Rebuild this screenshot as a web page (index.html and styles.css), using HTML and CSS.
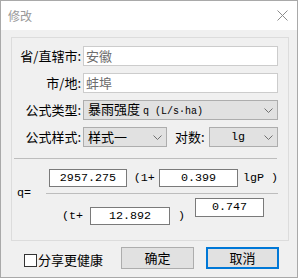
FILE: index.html
```html
<!DOCTYPE html>
<html lang="zh">
<head>
<meta charset="utf-8">
<title>修改</title>
<link rel="stylesheet" href="styles.css">
</head>
<body>
<div class="window">
  <div class="titlebar">
    <span class="title">修改</span>
    <svg class="close" width="11" height="11" viewBox="0 0 11 11"><path d="M0.5 0.5 L10.5 10.5 M10.5 0.5 L0.5 10.5" stroke="#8c8c8c" stroke-width="1" fill="none"/></svg>
  </div>
  <div class="content">
    <div class="group">
      <div class="form">
        <span class="label">省/直辖市:</span>
        <div class="field">安徽</div>
        <span class="label">市/地:</span>
        <div class="field">蚌埠</div>
        <span class="label">公式类型:</span>
        <div class="select"><span class="sel-text">暴雨强度 <span class="mono-s">q (L/s·ha)</span></span><svg class="chev" width="9" height="5" viewBox="0 0 9 5"><polyline points="0.5,0.5 4.5,4.5 8.5,0.5" fill="none" stroke="#707070" stroke-width="1"/></svg></div>
        <span class="label">公式样式:</span>
        <div class="row4">
          <div class="select s1"><span class="sel-text">样式一</span><svg class="chev" width="9" height="5" viewBox="0 0 9 5"><polyline points="0.5,0.5 4.5,4.5 8.5,0.5" fill="none" stroke="#707070" stroke-width="1"/></svg></div>
          <span class="label2">对数:</span>
          <div class="select s2"><span class="sel-text mono">lg</span><svg class="chev" width="9" height="5" viewBox="0 0 9 5"><polyline points="0.5,0.5 4.5,4.5 8.5,0.5" fill="none" stroke="#707070" stroke-width="1"/></svg></div>
        </div>
      </div>
      <div class="sep"></div>
      <div class="formula">
        <div class="fa">
          <div class="num n1">2957.275</div>
          <span class="op op1">(1+</span>
          <div class="num n2">0.399</div>
          <span class="op op2">lgP )</span>
        </div>
        <div class="fq">
          <span class="q">q=</span>
          <div class="fline"></div>
        </div>
        <div class="fb">
          <span class="op op3">(t+</span>
          <div class="num n3">12.892</div>
          <span class="op op4">)</span>
          <div class="num n4">0.747</div>
        </div>
      </div>
    </div>
    <div class="footer">
      <span class="checkbox"></span>
      <span class="check-label">分享更健康</span>
      <div class="buttons">
        <button class="btn">确定</button>
        <button class="btn btn-default">取消</button>
      </div>
    </div>
  </div>
</div>
</body>
</html>
```

FILE: styles.css
```css
* { box-sizing: border-box; }
html, body { margin: 0; padding: 0; background: #ffffff; }
body {
  font-family: "Noto Sans CJK SC", "Noto Sans", sans-serif;
  font-size: 13px;
  color: #000;
}
.window {
  width: 298px;
  height: 278px;
  border: 1px solid #a9a9a9;
  display: flex;
  flex-direction: column;
  background: #f0f0f0;
}
.titlebar {
  height: 29px;
  flex: none;
  background: #ffffff;
  display: flex;
  align-items: center;
  justify-content: space-between;
  padding: 0 9px 0 7px;
}
.title {
  font-size: 12px;
  line-height: 14px;
  color: #999999;
}
.close { display: block; }
.content {
  flex: 1;
  padding: 7px 8px 0 10px;
}
.group {
  height: 204px;
  border: 1px solid #dcdcdc;
  padding: 8px 10px 0 0;
}
.form {
  display: grid;
  grid-template-columns: 69px 1fr;
  column-gap: 2px;
  grid-auto-rows: 20px;
  row-gap: 7px;
}
.label {
  text-align: right;
  line-height: 20px;
  white-space: nowrap;
}
.field {
  background: #ffffff;
  border: 1px solid #cccccc;
  color: #6d6d6d;
  line-height: 18px;
  padding-left: 2px;
}
.select {
  background: #e1e1e1;
  border: 1px solid #adadad;
  display: flex;
  align-items: center;
  justify-content: space-between;
  padding: 0 4px 0 4px;
  line-height: 18px;
}
.sel-text { white-space: nowrap; }
.mono-s {
  font-family: "Liberation Mono", monospace;
  font-size: 10px;
}
.mono {
  font-family: "Liberation Mono", monospace;
  font-size: 11.7px;
}
.chev { display: block; flex: none; }
.row4 {
  display: flex;
  align-items: stretch;
}
.s1 { width: 84px; }
.label2 {
  margin-left: 8px;
  width: 34px;
  line-height: 20px;
  white-space: nowrap;
}
.s2 {
  width: 69px;
  padding-left: 21px;
}
.sep {
  height: 1px;
  background: #bdbdbd;
  margin: 11px 1px 0 2px;
}
.formula {
  font-family: "Liberation Mono", monospace;
  font-size: 11.7px;
}
.fa {
  display: flex;
  margin-top: 10px;
  padding-left: 37px;
  height: 18px;
}
.num {
  height: 18px;
  background: #ffffff;
  border: 1px solid #7a7a7a;
  text-align: center;
  line-height: 16px;
}
.n1 { width: 80px; }
.op { line-height: 18px; white-space: nowrap; }
.op1 { margin-left: 7px; width: 26px; }
.n2 { width: 81px; }
.op2 { margin-left: 5px; }
.fq {
  display: flex;
  height: 11px;
}
.q {
  margin-left: 5px;
  width: 14px;
  line-height: 12px;
  margin-top: 0;
}
.fline {
  flex: 1;
  height: 1px;
  background: #bdbdbd;
  margin: 6px 0 0 15px;
}
.fb {
  display: flex;
  align-items: flex-start;
  padding-left: 50px;
}
.op3 { width: 28px; margin-top: 9px; }
.n3 { width: 80px; margin-top: 9px; }
.op4 { margin-left: 8px; width: 17px; margin-top: 9px; }
.n4 { width: 69px; height: 19px; line-height: 17px; }
.footer {
  display: flex;
  align-items: flex-start;
  margin-top: 6px;
  height: 22px;
}
.checkbox {
  width: 13px;
  height: 13px;
  background: #ffffff;
  border: 1px solid #333333;
  margin: 7px 0 0 13px;
  flex: none;
}
.check-label {
  margin-left: 1px;
  margin-top: 3px;
  line-height: 20px;
}
.buttons {
  margin-left: auto;
  margin-right: 10px;
  display: flex;
  gap: 12px;
}
.btn {
  width: 73px;
  height: 22px;
  background: #e1e1e1;
  border: 1px solid #adadad;
  font-family: "Noto Sans CJK SC", sans-serif;
  font-size: 13px;
  color: #000;
  padding: 0;
  line-height: 20px;
}
.btn-default {
  border: 2px solid #0078d7;
  line-height: 18px;
}
```
